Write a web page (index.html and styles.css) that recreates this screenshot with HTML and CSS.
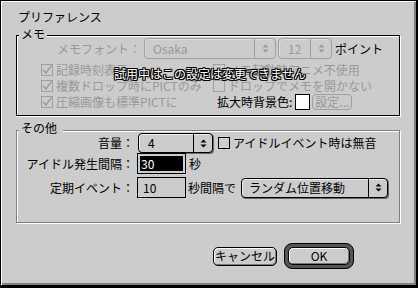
FILE: index.html
```html
<!DOCTYPE html>
<html lang="ja">
<head>
  <meta charset="UTF-8" />
  <title>プリファレンス</title>
  <link rel="stylesheet" href="styles.css">
</head>
<body>
  <div class="window">
    <div class="title">プリファレンス</div>

    <div class="group memo-group">
      <span class="group-title">メモ</span>

      <div class="font-row">
        <span class="font-label dim">メモフォント：</span>
        <div class="popup disabled font-popup">
          <span class="popup-value">Osaka</span>
          <span class="popup-arrows"><svg width="7" height="11" viewBox="0 0 7 11"><path d="M0.5 4.5 L3.5 1.5 L6.5 4.5 Z M0.5 6.5 L3.5 9.5 L6.5 6.5 Z" fill="currentColor"/></svg></span>
        </div>
        <div class="popup disabled size-popup">
          <span class="popup-value">12</span>
          <span class="popup-arrows"><svg width="7" height="11" viewBox="0 0 7 11"><path d="M0.5 4.5 L3.5 1.5 L6.5 4.5 Z M0.5 6.5 L3.5 9.5 L6.5 6.5 Z" fill="currentColor"/></svg></span>
        </div>
        <span class="unit">ポイント</span>
      </div>

      <div class="memo-options">
        <label class="check dim"><span class="box"><svg width="10" height="10" viewBox="0 0 10 10"><path d="M1 5 L4 8 L9.5 0.5" fill="none" stroke="currentColor" stroke-width="1.3"/></svg></span>記録時刻表示</label>
        <label class="check dim"><span class="box"></span>メモ起動時アニメ不使用</label>
        <label class="check dim"><span class="box"><svg width="10" height="10" viewBox="0 0 10 10"><path d="M1 5 L4 8 L9.5 0.5" fill="none" stroke="currentColor" stroke-width="1.3"/></svg></span>複数ドロップ時にPICTのみ</label>
        <label class="check dim"><span class="box"></span>ドロップでメモを開かない</label>
        <label class="check dim"><span class="box"><svg width="10" height="10" viewBox="0 0 10 10"><path d="M1 5 L4 8 L9.5 0.5" fill="none" stroke="currentColor" stroke-width="1.3"/></svg></span>圧縮画像も標準PICTに</label>
        <div class="bg-color">
          <span>拡大時背景色:</span>
          <span class="swatch"></span>
          <button class="small-btn" disabled>設定...</button>
        </div>
      </div>

      <div class="trial-note">試用中はこの設定は変更できません</div>
    </div>

    <div class="group other-group">
      <span class="group-title other-title">その他</span>

      <div class="row row-volume">
        <span class="row-label">音量：</span>
        <div class="popup volume-popup">
          <span class="popup-value">4</span>
          <span class="popup-arrows"><svg width="7" height="11" viewBox="0 0 7 11"><path d="M0.5 4.5 L3.5 1.5 L6.5 4.5 Z M0.5 6.5 L3.5 9.5 L6.5 6.5 Z" fill="currentColor"/></svg></span>
        </div>
        <label class="check mute-check"><span class="box"></span>アイドルイベント時は無音</label>
      </div>

      <div class="row row-field">
        <span class="row-label">アイドル発生間隔：</span>
        <div class="field"><span class="selected">30</span></div>
        <span class="after">秒</span>
      </div>

      <div class="row row-field row-event">
        <span class="row-label">定期イベント：</span>
        <div class="field"><span class="field-text">10</span></div>
        <span class="after after-tight">秒間隔で</span>
        <div class="popup event-popup">
          <span class="popup-value">ランダム位置移動</span>
          <span class="popup-arrows"><svg width="7" height="11" viewBox="0 0 7 11"><path d="M0.5 4.5 L3.5 1.5 L6.5 4.5 Z M0.5 6.5 L3.5 9.5 L6.5 6.5 Z" fill="currentColor"/></svg></span>
        </div>
      </div>
    </div>

    <div class="buttons">
      <button class="btn cancel-btn">キャンセル</button>
      <div class="default-ring">
        <button class="btn ok-btn">OK</button>
      </div>
    </div>
  </div>
</body>
</html>
```

FILE: styles.css
```css
* {
  box-sizing: border-box;
}

body {
  margin: 0;
  background: #000;
  font-family: "Noto Sans CJK JP", "Noto Sans", sans-serif;
  font-size: 12px;
  line-height: 16px;
  color: #000;
}

.window {
  width: 416px;
  height: 285px;
  background: #ccc;
  border-left: 1px solid #000;
  border-top: 1px solid #000;
  box-shadow: inset 1px 1px 0 #fff, inset -2px -2px 0 #808080;
  padding-top: 8px;
}

.title {
  margin-left: 17px;
}

.dim {
  color: #999;
}

/* group boxes */
.group {
  position: relative;
  margin-left: 15px;
  width: 384px;
  border: 1px solid #000;
  box-shadow: 1px 1px 0 #fff, inset 1px 1px 0 #fff;
}

.memo-group {
  margin-top: 10px;
  height: 81px;
}

.other-group {
  margin-top: 14px;
  height: 93px;
  border-color: #808080;
  padding-top: 2px;
}

.group-title {
  position: absolute;
  top: -10px;
  left: 2px;
  padding: 0 2px;
  background: #ccc;
}

.other-title {
  top: -11px;
  padding-right: 6px;
}

/* popups */
.popup {
  display: flex;
  height: 21px;
  border: 1px solid #000;
  border-radius: 4px;
  background: #ccc;
  box-shadow: inset 1px 1px 0 #eee, 1px 1px 0 #666;
}

.popup-value {
  flex: 1;
  line-height: 19px;
  white-space: nowrap;
}

.popup-arrows {
  display: flex;
  align-items: center;
  justify-content: center;
  border-left: 1px solid #000;
}

.popup.disabled {
  border-color: #a0a0a0;
  color: #999;
  box-shadow: inset 1px 1px 0 #ddd;
}

.popup.disabled .popup-arrows {
  border-left-color: #a0a0a0;
}

/* memo group */
.font-row {
  display: flex;
  align-items: center;
  height: 21px;
  margin-top: 2px;
  padding-left: 40px;
}

.font-label {
  width: 87px;
}

.font-popup {
  width: 132px;
}

.font-popup .popup-value {
  padding-left: 8px;
}

.font-popup .popup-arrows {
  width: 21px;
}

.size-popup {
  width: 54px;
  margin-left: 2px;
}

.size-popup .popup-value {
  padding-left: 9px;
}

.size-popup .popup-arrows {
  width: 21px;
}

.unit {
  margin-left: 3px;
}

.memo-options {
  display: grid;
  grid-template-columns: 172px auto;
  grid-auto-rows: 16px;
  margin-top: 3px;
  padding-left: 24px;
}

.check {
  display: flex;
  align-items: center;
  white-space: nowrap;
}

.box {
  display: flex;
  align-items: center;
  justify-content: center;
  width: 12px;
  height: 12px;
  border: 1px solid #000;
  margin-right: 3px;
}

.dim .box {
  border-color: #a0a0a0;
}

.bg-color {
  display: flex;
  align-items: center;
  padding-left: 4px;
  white-space: nowrap;
}

.swatch {
  width: 15px;
  height: 16px;
  margin-left: 3px;
  border: 1px solid #000;
  background: #fff;
}

.small-btn {
  width: 40px;
  height: 16px;
  margin-left: 2px;
  padding: 0;
  font: inherit;
  line-height: 14px;
  color: #999;
  background: #ccc;
  border: 1px solid #a0a0a0;
  border-radius: 4px;
}

.trial-note {
  position: absolute;
  left: 97px;
  top: 30px;
  color: #fff;
  white-space: nowrap;
  text-shadow:
    1px 0 0 #000, -1px 0 0 #000, 0 1px 0 #000, 0 -1px 0 #000,
    1px 1px 0 #000, -1px -1px 0 #000, 1px -1px 0 #000, -1px 1px 0 #000;
}

/* other group */
.row {
  display: flex;
  align-items: center;
  height: 20px;
  white-space: nowrap;
}

.row-field {
  height: 21px;
}

.row-event {
  margin-top: 3px;
}

.row-label {
  width: 117px;
  text-align: right;
}

.volume-popup {
  width: 75px;
  height: 20px;
  margin-left: 4px;
}

.volume-popup .popup-value {
  padding-left: 9px;
  line-height: 18px;
}

.volume-popup .popup-arrows {
  width: 19px;
}

.mute-check {
  margin-left: 5px;
}

.field {
  width: 49px;
  height: 21px;
  margin-left: 3px;
  padding: 2px;
  border: 1px solid #000;
}

.selected {
  display: block;
  height: 15px;
  line-height: 15px;
  padding-left: 1px;
  background: #000;
  color: #fff;
}

.field-text {
  display: block;
  line-height: 15px;
  padding-left: 3px;
}

.after {
  margin-left: 3px;
}

.after-tight {
  margin-left: 2px;
}

.event-popup {
  width: 147px;
  height: 20px;
  margin-left: 5px;
}

.event-popup .popup-value {
  padding-left: 7px;
  line-height: 18px;
}

.event-popup .popup-arrows {
  width: 19px;
}

/* buttons */
.buttons {
  display: flex;
  align-items: center;
  margin-top: 20px;
  padding-left: 212px;
}

.btn {
  height: 19px;
  padding: 0;
  font: inherit;
  line-height: 16px;
  color: #000;
  background: #ccc;
  border: 1px solid #000;
  border-radius: 5px;
  box-shadow: inset 1px 1px 0 #fff, inset -1px -1px 0 #777;
}

.cancel-btn {
  width: 64px;
}

.default-ring {
  margin-left: 7px;
  padding: 3px;
  border: 1px solid #000;
  border-radius: 8px;
  background: #555;
}

.ok-btn {
  display: block;
  width: 62px;
  height: 18px;
}
```
